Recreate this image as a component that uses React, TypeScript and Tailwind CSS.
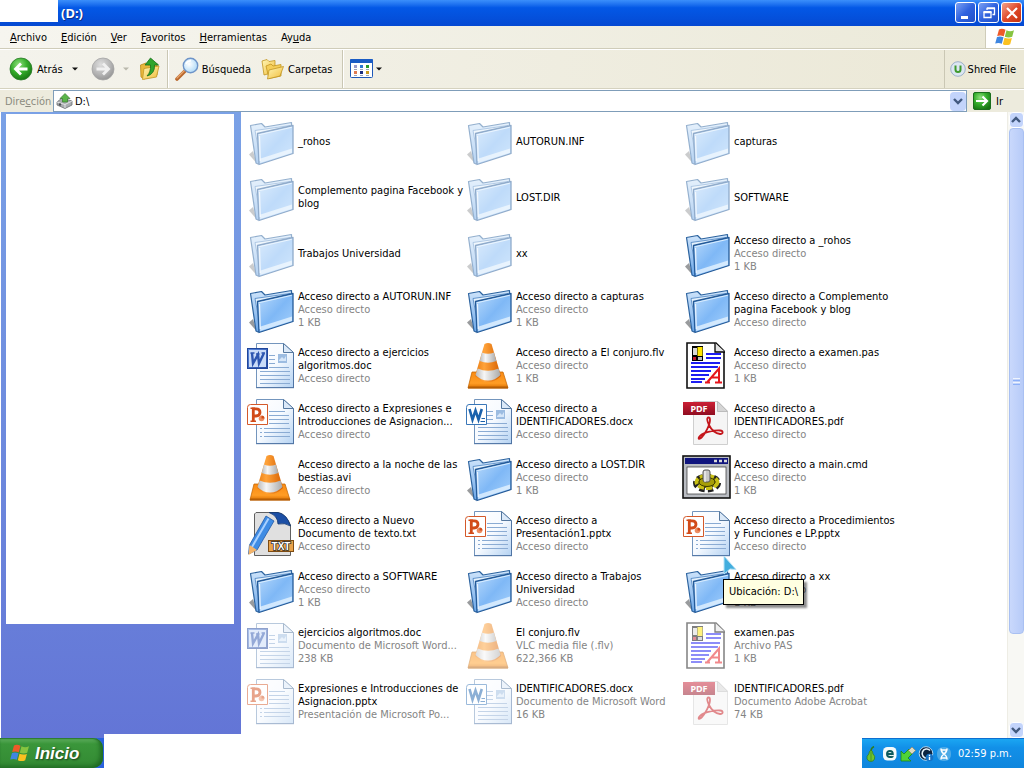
import React from "react";

type Kind =
  | "folder"
  | "doc"
  | "docx"
  | "pptx"
  | "vlc"
  | "pas"
  | "pdf"
  | "cmd"
  | "txt";

interface Entry {
  kind: Kind;
  faint?: boolean;
  name: string;
  info?: string[];
}

const LINK = "Acceso directo";

const entries: Entry[] = [
  { kind: "folder", faint: true, name: "_rohos" },
  { kind: "folder", faint: true, name: "AUTORUN.INF" },
  { kind: "folder", faint: true, name: "capturas" },
  { kind: "folder", faint: true, name: "Complemento pagina Facebook y\nblog" },
  { kind: "folder", faint: true, name: "LOST.DIR" },
  { kind: "folder", faint: true, name: "SOFTWARE" },
  { kind: "folder", faint: true, name: "Trabajos Universidad" },
  { kind: "folder", faint: true, name: "xx" },
  { kind: "folder", name: "Acceso directo a _rohos", info: [LINK, "1 KB"] },
  { kind: "folder", name: "Acceso directo a AUTORUN.INF", info: [LINK, "1 KB"] },
  { kind: "folder", name: "Acceso directo a capturas", info: [LINK, "1 KB"] },
  { kind: "folder", name: "Acceso directo a Complemento\npagina Facebook y blog", info: [LINK] },
  { kind: "doc", name: "Acceso directo a ejercicios\nalgoritmos.doc", info: [LINK] },
  { kind: "vlc", name: "Acceso directo a El conjuro.flv", info: [LINK, "1 KB"] },
  { kind: "pas", name: "Acceso directo a examen.pas", info: [LINK, "1 KB"] },
  { kind: "pptx", name: "Acceso directo a Expresiones e\nIntroducciones de Asignacion...", info: [LINK] },
  { kind: "docx", name: "Acceso directo a\nIDENTIFICADORES.docx", info: [LINK] },
  { kind: "pdf", name: "Acceso directo a\nIDENTIFICADORES.pdf", info: [LINK] },
  { kind: "vlc", name: "Acceso directo a la noche de las\nbestias.avi", info: [LINK] },
  { kind: "folder", name: "Acceso directo a LOST.DIR", info: [LINK, "1 KB"] },
  { kind: "cmd", name: "Acceso directo a main.cmd", info: [LINK, "1 KB"] },
  { kind: "txt", name: "Acceso directo a Nuevo\nDocumento de texto.txt", info: [LINK] },
  { kind: "pptx", name: "Acceso directo a\nPresentación1.pptx", info: [LINK] },
  { kind: "pptx", name: "Acceso directo a Procedimientos\ny Funciones e LP.pptx", info: [LINK] },
  { kind: "folder", name: "Acceso directo a SOFTWARE", info: [LINK, "1 KB"] },
  { kind: "folder", name: "Acceso directo a Trabajos\nUniversidad", info: [LINK] },
  { kind: "folder", name: "Acceso directo a xx", info: [LINK, "1 KB"] },
  { kind: "doc", faint: true, name: "ejercicios algoritmos.doc", info: ["Documento de Microsoft Word...", "238 KB"] },
  { kind: "vlc", faint: true, name: "El conjuro.flv", info: ["VLC media file (.flv)", "622,366 KB"] },
  { kind: "pas", faint: true, name: "examen.pas", info: ["Archivo PAS", "1 KB"] },
  { kind: "pptx", faint: true, name: "Expresiones e Introducciones de\nAsignacion.pptx", info: ["Presentación de Microsoft Po..."] },
  { kind: "docx", faint: true, name: "IDENTIFICADORES.docx", info: ["Documento de Microsoft Word", "16 KB"] },
  { kind: "pdf", faint: true, name: "IDENTIFICADORES.pdf", info: ["Documento Adobe Acrobat", "74 KB"] },
];

function Defs() {
  return (
    <svg className="absolute size-0" aria-hidden="true">
      <defs>
        <linearGradient id="fold" x1="0" y1="0" x2="1" y2="1">
          <stop offset="0" stopColor="#b9dafb" />
          <stop offset="0.5" stopColor="#7fb8f6" />
          <stop offset="1" stopColor="#a8d2fc" />
        </linearGradient>
        <linearGradient id="foldBack" x1="0" y1="0" x2="0" y2="1">
          <stop offset="0" stopColor="#cfe5fb" />
          <stop offset="1" stopColor="#6ba6e8" />
        </linearGradient>
        <linearGradient id="page" x1="0" y1="0" x2="1" y2="1">
          <stop offset="0" stopColor="#ffffff" />
          <stop offset="0.5" stopColor="#f6faff" />
          <stop offset="1" stopColor="#b4d2f2" />
        </linearGradient>
        <linearGradient id="cone" x1="0" y1="0" x2="1" y2="0">
          <stop offset="0" stopColor="#e87a10" />
          <stop offset="0.35" stopColor="#ffa33a" />
          <stop offset="1" stopColor="#d65f00" />
        </linearGradient>
        <linearGradient id="coneBase" x1="0" y1="0" x2="0" y2="1">
          <stop offset="0" stopColor="#f98a12" />
          <stop offset="0.7" stopColor="#ff9d25" />
          <stop offset="1" stopColor="#dc7000" />
        </linearGradient>
        <linearGradient id="stripe" x1="0" y1="0" x2="1" y2="0">
          <stop offset="0" stopColor="#b9b9b9" />
          <stop offset="0.35" stopColor="#f6f6f6" />
          <stop offset="1" stopColor="#a9a9a9" />
        </linearGradient>
        <linearGradient id="wordBadge" x1="0" y1="0" x2="1" y2="1">
          <stop offset="0" stopColor="#5c8be0" />
          <stop offset="1" stopColor="#24499f" />
        </linearGradient>
        <linearGradient id="red" x1="0" y1="0" x2="0" y2="1">
          <stop offset="0" stopColor="#cc2035" />
          <stop offset="1" stopColor="#8f0d20" />
        </linearGradient>
        <radialGradient id="green" cx="0.4" cy="0.3" r="0.75">
          <stop offset="0" stopColor="#8fe07c" />
          <stop offset="0.5" stopColor="#35ad2b" />
          <stop offset="1" stopColor="#167312" />
        </radialGradient>
        <radialGradient id="grey" cx="0.4" cy="0.3" r="0.75">
          <stop offset="0" stopColor="#dedede" />
          <stop offset="0.6" stopColor="#b4b4b4" />
          <stop offset="1" stopColor="#919191" />
        </radialGradient>
        <linearGradient id="yellow" x1="0" y1="0" x2="1" y2="1">
          <stop offset="0" stopColor="#fff6b5" />
          <stop offset="1" stopColor="#f1bd3b" />
        </linearGradient>
        <radialGradient id="lens" cx="0.4" cy="0.4" r="0.6">
          <stop offset="0" stopColor="#ffffff" />
          <stop offset="1" stopColor="#b3dcf8" />
        </radialGradient>
      </defs>
    </svg>
  );
}

function Page({ lines }: { lines: React.ReactNode }) {
  return (
    <>
      <path d="M9.500 2.500H36.500L46.500 11.500V46.500H9.500Z" fill="url(#page)" stroke="#7395bd" />
      <path d="M46.500 12V47M9 46.700H47" stroke="#4f74a4" strokeWidth="1" />
      <path d="M36.500 2.500V11.500H46.500Z" fill="#dbe9f8" stroke="#55789f" />
      {lines}
    </>
  );
}

function FileIcon({ kind, faint }: { kind: Kind; faint?: boolean }) {
  return (
    <svg
      viewBox="0 0 48 48"
      className={faint ? "size-12 shrink-0 overflow-visible opacity-50" : "size-12 shrink-0 overflow-visible"}
      aria-hidden="true"
    >
      {kind === "folder" && (
        <g strokeLinejoin="round">
          <path d="M2 37.500L6 34L10 46.500Z" fill="#77797c" opacity="0.75" />
          <path
            d="M3.500 8.500L14.500 6.500L18 10L44.500 5.500V10L42 34L11 47L9 46Z"
            fill="url(#foldBack)"
            stroke="#2c639f"
            strokeWidth="1.200"
          />
          <path d="M8 13.500L43 8.500L43.500 12L13 40Z" fill="#e3f1fd" stroke="#4a82c0" strokeWidth="0.800" />
          <path d="M10.500 16.500L46 8.500V36.500L12 47.500Z" fill="url(#fold)" stroke="#245a98" strokeWidth="1.300" />
          <path d="M11.800 17.800L44.800 10.300" stroke="#d9edff" strokeWidth="1" />
          <path d="M13.500 41.500L45 31.500V35.800L13 46Z" fill="#e9f5ff" opacity="0.750" />
          <path d="M12.500 19L13.300 44" stroke="#ffffff" strokeWidth="1.200" opacity="0.800" />
        </g>
      )}
      {kind === "doc" && (
        <g>
          <Page
            lines={
              <>
                <path d="M22 14.500H28M22 18.500H28M22 22.500H28M22 26.500H42M13 30.500H43M13 34.500H43M13 38.500H43M13 42.500H43" stroke="#8aabd3" />
                <rect x="31" y="13" width="9" height="9" fill="#9cbce1" />
                <path d="M32 19l3-3 2 2 2-3v5h-7z" fill="#d6e6f8" />
              </>
            }
          />
          <rect x="0.500" y="7.500" width="20" height="20" fill="url(#wordBadge)" stroke="#21469b" />
          <rect x="2" y="9" width="17" height="17" fill="#c9dbf8" />
          <path d="M5 12L6 22.500L11 13.500L12 22.500L17 12" fill="none" stroke="#2c55b0" strokeWidth="2.400" />
          <path d="M3.500 12H7.500M9 13H12.500M14.500 12H18" stroke="#2c55b0" strokeWidth="1.300" />
        </g>
      )}
      {kind === "docx" && (
        <g>
          <Page
            lines={
              <>
                <path d="M22 14.500H28M22 18.500H28M22 22.500H28M22 26.500H42M13 30.500H43M13 34.500H43M13 38.500H43M13 42.500H43" stroke="#8aabd3" />
                <rect x="31" y="13" width="9" height="9" fill="#9cbce1" />
                <path d="M32 19l3-3 2 2 2-3v5h-7z" fill="#d6e6f8" />
              </>
            }
          />
          <path d="M4 7.500H21.500V27.500H1.500V10.500Q1.500 7.500 4 7.500Z" fill="#fff" stroke="#3a77b8" />
          <path d="M4.500 12L7.500 22.500L10.500 13.500L13.500 22.500L16.800 12" fill="none" stroke="#1b62ac" strokeWidth="2.600" />
          <path d="M16.500 21.500H20M15.500 24.500H20" stroke="#1b62ac" />
        </g>
      )}
      {kind === "pptx" && (
        <g>
          <Page
            lines={
              <>
                <path d="M22 14.500H38M22 18.500H42M22 22.500H42M22 26.500H42M17 31.500H43M17 35.500H43M17 39.500H43" stroke="#8aabd3" />
                <path d="M13 31.500H15M13 35.500H15M13 39.500H15" stroke="#8aabd3" />
              </>
            }
          />
          <path d="M3.500 7.500H20.500V27.500H0.500V10.500Q0.500 7.500 3.500 7.500Z" fill="#fff" stroke="#d4592a" />
          <path d="M6.300 25V11.800H9Q13 11.800 13 15.300T9 19H6.300" fill="none" stroke="#d24b19" strokeWidth="2.800" />
          <path d="M3.500 11.300H8M3.500 24.300H9" stroke="#d24b19" strokeWidth="1.500" />
          <circle cx="14.500" cy="21.500" r="2.800" fill="#ed8d62" />
          <path d="M14.500 21.500V18.500A3 3 0 0 1 17.500 21.500Z" fill="#d24b19" />
        </g>
      )}
      {kind === "vlc" && (
        <g>
          <path d="M7 31H38L43 47H3Z" fill="url(#coneBase)" stroke="#c66a08" strokeWidth="0.800" />
          <path d="M3 45.500H43V47.500H3Z" fill="#b55e06" />
          <path d="M19.500 3Q23 1 26.500 3L36 35Q30 41 23 41T10 35Z" fill="url(#cone)" />
          <path d="M17 11.500Q23 14 29 11.500L31.300 20Q23 23.500 14.700 20Z" fill="url(#stripe)" />
          <path d="M12.600 27.500Q23 32 33.600 27.500L35.500 34Q30 39.500 23 39.500T10.500 34Z" fill="url(#stripe)" />
        </g>
      )}
      {kind === "pas" && (
        <g>
          <path d="M4 2H33L41 10V47H4Z" fill="#fff" stroke="#111" strokeWidth="1.600" />
          <path d="M32 2V11H42" fill="#e4e4e4" stroke="#000" strokeWidth="1.300" />
          <rect x="9" y="5" width="11" height="15" fill="#000" />
          <rect x="10" y="7" width="4" height="7" fill="#d8d8d8" />
          <rect x="14.500" y="6" width="5" height="9" fill="#ffe600" />
          <rect x="10" y="16" width="3" height="3" fill="#c5172e" />
          <rect x="15" y="16" width="4" height="3" fill="#bcbcbc" />
          <path d="M23 13H38M23 17H38M8 22H37M8 26H35M8 30H28M8 34H26M8 38H22M8 41H19" stroke="#1d1df2" strokeWidth="2" />
          <path d="M22 41.500H28M24 41L36.500 27.500V41.500M32 41.500H39M27.500 36.500H36" fill="none" stroke="#fff" strokeWidth="4" />
          <path d="M22 41.500H27M24 41.500L36 27.500V41.500M32 41.500H39M28 36.500H36" fill="none" stroke="#e5161c" strokeWidth="2" />
        </g>
      )}
      {kind === "pdf" && (
        <g>
          <path d="M10.500 4.500H35L44.500 14V47.500H10.500Z" fill="#f5f5f5" stroke="#cfcfcf" />
          <path d="M34.500 4.500V14.500H44.500Z" fill="#d5d5d5" stroke="#bcbcbc" />
          <rect x="0" y="5" width="32" height="13" fill="url(#red)" />
          <text x="16" y="15" textAnchor="middle" fontFamily="Noto Sans, sans-serif" fontSize="9" fontWeight="700" fill="#fff">
            PDF
          </text>
          <path
            d="M25.500 20.500C23.500 20.500 24 24 26 28C28 32 32 36.500 37 37C40.500 37.300 40.500 33.800 37 33.500C31 33 21 35.500 17.500 38.500C14 41.500 16 43 18.500 40.500C22 37 27 28 27 23C27 21.500 26.500 20.500 25.500 20.500Z"
            fill="none"
            stroke="#c4161c"
            strokeWidth="1.800"
          />
        </g>
      )}
      {kind === "cmd" && (
        <g>
          <rect x="0" y="3" width="47" height="42" fill="#b9bcc2" stroke="#111" strokeWidth="1.600" />
          <rect x="2" y="5" width="43" height="6" fill="#10157e" />
          <path d="M31 8H34M36 8H39M41 8H44" stroke="#d9d9d9" strokeWidth="2.500" />
          <rect x="4" y="14" width="39" height="27" fill="#fff" stroke="#333" strokeWidth="0.700" />
          <ellipse cx="24" cy="30" rx="11" ry="6.500" fill="none" stroke="#222" strokeWidth="6" strokeDasharray="5 3" />
          <ellipse cx="24" cy="29" rx="10.500" ry="6" fill="#4a4700" stroke="#c8bf14" strokeWidth="4" strokeDasharray="6 2" />
          <ellipse cx="24" cy="29" rx="8" ry="4.500" fill="#a79e08" stroke="#3b3800" />
          <rect x="20" y="17" width="7" height="12" rx="2" fill="#c9c9c9" stroke="#555" />
          <path d="M22 18V29" stroke="#fff" />
        </g>
      )}
      {kind === "txt" && (
        <g>
          <path d="M9 3.500H30Q38 4 43.500 16V46.500H7.500V5Z" fill="#e0e0e0" stroke="#606060" />
          <path d="M22 3.500H31Q40 5 43.500 17Q38 13.500 31 15Q31 7 22 3.500Z" fill="#1c4fa5" stroke="#12366f" strokeWidth="0.800" />
          <path d="M19 7L27 12L10 41L1.500 45L2.500 36Z" fill="#3f8ce4" stroke="#2159a8" strokeWidth="0.800" />
          <path d="M21.500 9.500L5 38" stroke="#a9d1ff" strokeWidth="2" />
          <path d="M2.500 36L10 41L1.500 46Z" fill="#f4b469" />
          <rect x="21.500" y="31.500" width="25" height="11" fill="#e8a24a" stroke="#7e4c12" />
          <text x="34" y="40.500" textAnchor="middle" fontFamily="Liberation Sans, sans-serif" fontSize="10" fontWeight="700" fill="#fff" stroke="#2c2c2c" strokeWidth="1.600" paintOrder="stroke">
            TXT
          </text>
        </g>
      )}
    </svg>
  );
}

function Flag({ className }: { className: string }) {
  return (
    <svg viewBox="0 0 20 18" className={className} aria-hidden="true">
      <path d="M4 1.500Q7 0 10.500 1.800L8.800 8.300Q5.500 6.800 2.200 8Z" fill="#ee5a29" />
      <path d="M11.500 2.300Q15 4 19 2.300L17.200 8.800Q13.500 10.300 9.800 8.700Z" fill="#86c440" />
      <path d="M2 9Q5 7.700 8.500 9.300L6.800 15.800Q3.500 14.300 0.200 15.600Z" fill="#3f86e0" />
      <path d="M9.500 9.800Q13 11.300 16.900 9.900L15.200 16.200Q11.500 18 7.800 16.200Z" fill="#fbc120" />
    </svg>
  );
}

function Caret({ faint }: { faint?: boolean }) {
  return (
    <svg viewBox="0 0 6 4" className="h-1 w-1.5" aria-hidden="true">
      <path d="M0 0.500H6L3 3.500Z" fill={faint ? "#b9b8ac" : "#111"} />
    </svg>
  );
}

function Chevron({ up }: { up?: boolean }) {
  return (
    <svg viewBox="0 0 10 8" className="h-2 w-2.5" aria-hidden="true">
      <path d={up ? "M1 6L5 2L9 6" : "M1 2L5 6L9 2"} fill="none" stroke="#41597f" strokeWidth="2.400" />
    </svg>
  );
}

function RoundArrow({ back }: { back?: boolean }) {
  return (
    <svg viewBox="0 0 24 24" className="size-6" aria-hidden="true">
      <circle cx="12" cy="12" r="11" fill={back ? "url(#green)" : "url(#grey)"} stroke={back ? "#2b7a28" : "#a5a5a5"} strokeWidth="0.800" />
      <path
        d={back ? "M18.500 12H7M12 6.500L6.500 12L12 17.500" : "M5.500 12H17M12 6.500L17.500 12L12 17.500"}
        fill="none"
        stroke={back ? "#fff" : "#f0f0f0"}
        strokeWidth="2.800"
      />
    </svg>
  );
}

const menus: [string, string, string][] = [
  ["", "A", "rchivo"],
  ["", "E", "dición"],
  ["", "V", "er"],
  ["", "F", "avoritos"],
  ["", "H", "erramientas"],
  ["Ay", "u", "da"],
];

const winButton =
  "flex size-[21px] items-center justify-center rounded-[3px] border border-white bg-linear-to-br from-[#7c9ff2] via-[#2f62df] to-[#2150c8]";

function TitleBar() {
  return (
    <header className="flex h-[26px] shrink-0 items-start bg-linear-to-b from-[#3b8ffb] via-[#0358e6] via-30% to-[#0549d2]">
      <div className="h-[22px] w-[58px] bg-white" />
      <h1 className="pl-[3px] pt-1 font-['Noto_Sans',sans-serif] text-[13px] leading-[18px] font-bold text-white [text-shadow:1px_1px_#0a2f8a]">
        (D:)
      </h1>
      <div className="ml-auto flex gap-[2px] pt-[2px] pr-[2px]">
        <button type="button" aria-label="Minimizar" className={winButton}>
          <svg viewBox="0 0 18 18" className="size-[18px]">
            <path d="M4 13.500H11" stroke="#fff" strokeWidth="3" />
          </svg>
        </button>
        <button type="button" aria-label="Restaurar" className={winButton}>
          <svg viewBox="0 0 18 18" className="size-[18px]" fill="none" stroke="#fff">
            <path d="M7 6V4.500H14.500V10.500H12.500M7 4H15" strokeWidth="1.300" />
            <path d="M4 8.500H11V13.500H4Z" strokeWidth="1.300" />
            <path d="M3.500 8H11.500" strokeWidth="2" />
          </svg>
        </button>
        <button
          type="button"
          aria-label="Cerrar"
          className="flex size-[21px] items-center justify-center rounded-[3px] border border-white bg-linear-to-br from-[#f0a088] via-[#e0492a] to-[#c5330f]"
        >
          <svg viewBox="0 0 18 18" className="size-[18px]">
            <path d="M4 4L14 14M14 4L4 14" stroke="#fff" strokeWidth="2.200" />
          </svg>
        </button>
      </div>
    </header>
  );
}

function MenuBar() {
  return (
    <nav className="flex h-[23px] shrink-0 items-stretch justify-between border-b border-[#cfccb9] bg-linear-to-r from-[#f6f5ef] to-[#ebe9d8]">
      <div className="flex items-center pl-[3px]">
        {menus.map(([a, key, b]) => (
          <button type="button" key={key} className="px-[7px]">
            {a}
            <span className="underline">{key}</span>
            {b}
          </button>
        ))}
      </div>
      <div className="flex w-[39px] items-center justify-center border-l border-[#cfccb9] bg-white">
        <Flag className="h-[18px] w-5" />
      </div>
    </nav>
  );
}

function Toolbar() {
  return (
    <div className="flex h-10 shrink-0 items-stretch border-t border-b border-t-white border-b-[#d5d2bf] bg-linear-to-r from-[#f4f3ec] to-[#ebe8d6]">
      <div className="flex items-center pl-[9px]">
        <button type="button" className="flex items-center gap-1">
          <RoundArrow back />
          Atrás
        </button>
        <button type="button" aria-label="Historial atrás" className="ml-[9px]">
          <Caret />
        </button>
        <button type="button" aria-label="Adelante" className="ml-[13px]">
          <RoundArrow />
        </button>
        <button type="button" aria-label="Historial adelante" className="ml-2">
          <Caret faint />
        </button>
        <button type="button" aria-label="Arriba" className="ml-[10px]">
          <svg viewBox="0 0 22 24" className="h-6 w-[22px]">
            <path d="M1.500 8L7 6L9 8L18 6.500V18L5 22L2 20Z" fill="#e9b83c" stroke="#ba8a18" strokeWidth="0.800" />
            <path d="M5 11.500L20 9L17.500 20L3.500 22.500Z" fill="url(#yellow)" stroke="#c29522" strokeWidth="0.800" />
            <path d="M11.500 1L19.500 8H15.500Q16 17 8 19Q12 15 11.500 8H6Z" fill="#2fa52d" stroke="#17701a" strokeWidth="0.800" />
          </svg>
        </button>
      </div>
      <div className="ml-[6px] w-[2px] border-l border-[#cac7b4] bg-white" />
      <div className="flex items-center pl-[6px]">
        <button type="button" className="flex items-center gap-[3px]">
          <svg viewBox="0 0 24 24" className="size-6">
            <path d="M10 14L2 22" stroke="#b9672c" strokeWidth="3.600" strokeLinecap="round" />
            <path d="M9.500 13.500L2 21" stroke="#e8a56e" strokeWidth="1.200" strokeLinecap="round" />
            <circle cx="15.500" cy="8.500" r="7.200" fill="url(#lens)" stroke="#6e94c8" strokeWidth="1.400" />
            <path d="M11 7Q12.500 3.800 16 3.800" stroke="#fff" strokeWidth="1.600" fill="none" />
          </svg>
          Búsqueda
        </button>
        <button type="button" className="ml-[10px] flex items-center gap-1">
          <svg viewBox="0 0 23 22" className="h-[22px] w-[23px]">
            <path d="M1 3L6 1.500L8 3.500L14 2.500V14L3 17Z" fill="url(#yellow)" stroke="#c29522" strokeWidth="0.800" />
            <path d="M5 8L10 6L12 8L20 6.500V18L8 20.500Z" fill="#f5ce58" stroke="#c29522" strokeWidth="0.800" />
            <path d="M8 12L22.500 8.500L19 18L6.500 21Z" fill="url(#yellow)" stroke="#c29522" strokeWidth="0.800" />
          </svg>
          Carpetas
        </button>
      </div>
      <div className="ml-[10px] w-[2px] border-l border-[#cac7b4] bg-white" />
      <button type="button" aria-label="Vistas" className="flex items-center gap-[2px] pl-[6px]">
        <svg viewBox="0 0 24 20" className="h-5 w-6">
          <rect x="0.500" y="0.500" width="22" height="18" rx="1" fill="#fff" stroke="#1d58b8" />
          <rect x="0" y="0" width="23" height="4" rx="1" fill="#1a5cc4" />
          <path d="M4 7.500H7" stroke="#9a9ccb" strokeWidth="3" />
          <path d="M4 13.500H7" stroke="#e07a50" strokeWidth="3" />
          <path d="M10 7.500H13" stroke="#2b76d0" strokeWidth="3" />
          <path d="M10 13.500H13" stroke="#1c2f80" strokeWidth="3" />
          <path d="M16 7.500H19" stroke="#2a9a2a" strokeWidth="3" />
          <path d="M16 13.500H19" stroke="#c99a1e" strokeWidth="3" />
          <path d="M4 10.500H7M10 10.500H13M16 10.500H19M4 16.500H7M10 16.500H13M16 16.500H19" stroke="#9aa3b5" />
        </svg>
        <Caret />
      </button>
      <div className="ml-auto flex items-center border-l border-[#cac7b4] pr-2 pl-[5px]">
        <button type="button" className="flex items-center gap-[2px]">
          <svg viewBox="0 0 16 16" className="size-4">
            <circle cx="8" cy="8" r="7.300" fill="#dce6f2" stroke="#9db0c8" />
            <path d="M5.500 4.500V8.500Q5.500 11 8 11T10.500 8.500V4.500" fill="none" stroke="#3f9a2e" strokeWidth="2" />
          </svg>
          Shred File
        </button>
      </div>
    </div>
  );
}

function AddressBar() {
  return (
    <form className="flex h-[23px] shrink-0 items-stretch border-t border-white bg-[#edebdd]">
      <label htmlFor="address" className="flex w-[53px] items-center pl-[5px] text-[#8c8b80]">
        <span>
          Dire<span className="underline">c</span>ción
        </span>
      </label>
      <div className="flex flex-1 items-center border border-[#7f9db9] bg-white pl-[2px]">
        <svg viewBox="0 0 17 16" className="h-4 w-[17px]" aria-hidden="true">
          <path d="M1 9L6 5L16 8V12L9 15.500L1 12Z" fill="#a9acb0" stroke="#6b6e72" strokeWidth="0.800" />
          <path d="M1 9L9 11.500L16 8M9 11.500V15" stroke="#e7e8ea" fill="none" strokeWidth="0.900" />
          <circle cx="4" cy="11.500" r="1.200" fill="#4b4e52" />
          <path d="M9 0.500L14 5.500H11.500V9H6.500V5.500H4Z" fill="#59b548" stroke="#3a7d31" strokeWidth="0.700" />
        </svg>
        <input id="address" defaultValue={"D:\\"} className="min-w-0 flex-1 bg-transparent pl-[2px] outline-none" />
        <button
          type="button"
          aria-label="Mostrar direcciones"
          className="flex h-[19px] w-4 items-center justify-center rounded-sm bg-[#c3d4fb]"
        >
          <Chevron />
        </button>
      </div>
      <button type="button" className="flex w-[57px] items-center gap-[5px] pl-[6px]">
        <svg viewBox="0 0 18 18" className="size-[18px]" aria-hidden="true">
          <rect x="0.500" y="0.500" width="17" height="17" rx="1.500" fill="url(#green)" stroke="#1b6e1c" />
          <path d="M3 9H14M9.500 4.500L14 9L9.500 13.500" fill="none" stroke="#fff" strokeWidth="2.200" />
        </svg>
        Ir
      </button>
    </form>
  );
}

function Tooltip() {
  return (
    <>
      <svg viewBox="0 0 14 24" className="absolute -top-1.5 left-10 h-6 w-3.5" aria-hidden="true">
        <path d="M1 1L13 14.500L7 14L1 19Z" fill="#43aede" stroke="#b8e3f6" strokeWidth="1" />
      </svg>
      <div
        role="tooltip"
        className="absolute top-[18px] left-10 z-10 border border-black bg-[#ffffe1] px-[5px] py-[5px] leading-[14px] whitespace-nowrap shadow-[3px_3px_2px_rgba(0,0,0,0.45)]"
      >
        Ubicación: D:\
      </div>
    </>
  );
}

function Files() {
  return (
    <ul className="grid flex-1 auto-rows-[56px] grid-cols-[repeat(auto-fill,218px)] content-start pt-px pl-[6px]">
      {entries.map((e) => (
        <li key={e.name} className="relative flex items-center gap-[3px]">
          <FileIcon kind={e.kind} faint={e.faint} />
          <div className="whitespace-pre">
            <p>{e.name}</p>
            {e.info?.map((line) => (
              <p key={line} className="text-[#848484]">
                {line}
              </p>
            ))}
          </div>
          {e.name === "Acceso directo a xx" && <Tooltip />}
        </li>
      ))}
    </ul>
  );
}

const scrollButton =
  "flex h-4 w-[15px] shrink-0 items-center justify-center rounded-sm border border-white bg-[#c3d4fb]";

function ScrollBar() {
  return (
    <div className="flex w-[17px] shrink-0 flex-col items-center border-l border-[#eeede5] bg-[#f8f8f4]">
      <button type="button" aria-label="Subir" className={scrollButton}>
        <Chevron up />
      </button>
      <div className="flex w-full flex-1 flex-col items-center">
        <div className="flex w-[15px] flex-[506] flex-col items-center justify-center gap-px rounded-sm border border-[#a9c0f2] bg-linear-to-r from-[#c9d8fc] to-[#b7cbf8]">
          <div className="h-px w-[7px] bg-[#eef4fe]" />
          <div className="h-px w-[7px] bg-[#8cb0f8]" />
          <div className="h-px w-[7px] bg-[#eef4fe]" />
          <div className="h-px w-[7px] bg-[#8cb0f8]" />
        </div>
        <div className="flex-[88]" />
      </div>
      <button type="button" aria-label="Bajar" className={scrollButton}>
        <Chevron />
      </button>
    </div>
  );
}

function TaskBar() {
  return (
    <footer className="relative flex h-[30px] shrink-0 items-stretch">
      <div className="w-[104px] bg-[#2a62dd]">
        <button
          type="button"
          className="flex h-full w-[103px] items-center gap-[5px] rounded-r-[10px] bg-linear-to-b from-[#5fae5f] via-[#3a963a] via-20% to-[#338a33] pl-[10px] font-['Liberation_Sans',sans-serif] text-[17px] font-bold text-white italic shadow-[inset_-3px_-2px_4px_#1f6a22,inset_0_1px_1px_#2e7d32] [text-shadow:1px_1px_2px_#1b3f1b]"
        >
          <Flag className="h-[18px] w-5" />
          Inicio
        </button>
      </div>
      <div className="-mt-1 flex-1 bg-white" />
      <div className="flex w-[162px] items-center gap-[2px] border-t border-[#0d6fd0] bg-linear-to-b from-[#1ba6f2] via-[#1290e8] via-30% to-[#0f86dd] pl-[2px] text-white">
        <svg viewBox="0 0 16 16" className="size-4" aria-hidden="true">
          <path d="M7 5Q7 2 10 0.500" stroke="#2e7d1f" strokeWidth="1.500" fill="none" />
          <path d="M7 4Q9 5 9 8Q11.500 10 10.500 13Q9.500 15.500 7 15.500T3 13Q2.300 10 4.800 8Q5 5 7 4Z" fill="#6fc530" stroke="#2f7a1c" strokeWidth="0.700" />
          <path d="M7 5V15" stroke="#2f7a1c" strokeWidth="0.600" />
        </svg>
        <svg viewBox="0 0 16 16" className="size-4" aria-hidden="true">
          <rect x="1" y="1" width="13.500" height="13.500" rx="4.500" fill="#f4fbfb" />
          <path d="M5 8H10.800Q10.800 5 7.900 5T5 8Q5 11 8 11T10.700 10" fill="none" stroke="#0d5b5e" strokeWidth="1.900" />
        </svg>
        <svg viewBox="0 0 16 16" className="size-4" aria-hidden="true">
          <path d="M1 5L4 8L9 3L13 7L8 12L11 15H1Z" fill="#50d336" stroke="#1c8517" strokeWidth="0.800" />
          <path d="M8.500 4.500L12 1L15.500 4.500L12 8Z" fill="#dedac2" stroke="#8b8468" strokeWidth="0.700" />
        </svg>
        <svg viewBox="0 0 16 16" className="size-4" aria-hidden="true">
          <circle cx="8" cy="7.500" r="6.800" fill="#0c2340" stroke="#b7d9ef" />
          <path d="M12 4.500A4.500 4.500 0 1 0 9 12" fill="none" stroke="#e8f4fb" strokeWidth="1.600" />
          <circle cx="11.500" cy="11.500" r="3.800" fill="#1671c4" />
          <path d="M11.500 10.800V14M11.500 8.800V9.900" stroke="#fff" strokeWidth="1.400" />
        </svg>
        <svg viewBox="0 0 16 16" className="size-4" aria-hidden="true">
          <rect x="1" y="1" width="14" height="14" rx="6" fill="#4ba9e6" />
          <path d="M5 2.500Q5 6 8 8T11 13.500M11 2.500Q11 6 8 8T5 13.500M5.500 4H10.500M5.500 12H10.500" fill="none" stroke="#fff" strokeWidth="1.500" />
        </svg>
        <time className="ml-1">02:59 p.m.</time>
      </div>
    </footer>
  );
}

export default function App() {
  return (
    <div className="flex h-screen flex-col overflow-hidden bg-white font-['DejaVu_Sans_Condensed','DejaVu_Sans',sans-serif] text-[11px] leading-[13px] text-black">
      <Defs />
      <TitleBar />
      <MenuBar />
      <Toolbar />
      <AddressBar />
      <main className="flex min-h-0 flex-1 items-stretch">
        <aside className="ml-px w-60 shrink-0 bg-linear-to-b from-[#7aa1e6] to-[#6375d6] pt-[2px] pr-[7px] pb-[114px] pl-[5px]">
          <div className="h-full bg-white" />
        </aside>
        <Files />
        <ScrollBar />
      </main>
      <TaskBar />
    </div>
  );
}
